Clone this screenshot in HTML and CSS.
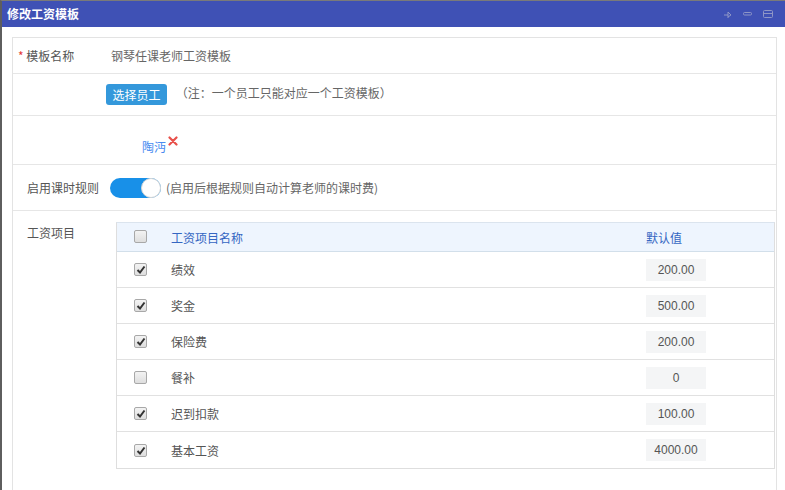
FILE: index.html
```html
<!DOCTYPE html>
<html lang="zh">
<head>
<meta charset="utf-8">
<title>修改工资模板</title>
<link rel="stylesheet" href="styles.css">
</head>
<body>
<div class="window">
  <div class="titlebar">
    <span class="title">修改工资模板</span>
    <div class="tools">
      <svg width="8" height="7" viewBox="0 0 8 7"><path d="M0 4h4M4 1v6M4 1l3 3l-3 2" fill="none" stroke="#8f96c6" stroke-width="1"/></svg>
      <svg width="9" height="4" viewBox="0 0 9 4"><rect x="0.5" y="0.5" width="8" height="2.5" rx="1" fill="none" stroke="#8f96c6"/></svg>
      <svg width="10" height="8" viewBox="0 0 10 8"><rect x="0.5" y="0.5" width="9" height="7" rx="1" fill="none" stroke="#8f96c6"/><path d="M1 3.5h8" stroke="#8f96c6"/></svg>
    </div>
  </div>
  <div class="content">
    <div class="form">
      <div class="row row-name">
        <div class="label"><span class="req">*</span> 模板名称</div>
        <div class="value name-value">钢琴任课老师工资模板</div>
      </div>
      <div class="row row-select">
        <div class="label"></div>
        <div class="value">
          <button class="btn">选择员工</button>
          <span class="note">（注：一个员工只能对应一个工资模板）</span>
        </div>
      </div>
      <div class="row row-staff">
        <div class="label"></div>
        <div class="value staff">
          <span class="staff-name">陶沔</span><svg class="remove" width="10" height="10" viewBox="0 0 10 10"><path d="M1.5 1.5l7 7M8.5 1.5l-7 7" stroke="#e8504a" stroke-width="2.2" stroke-linecap="round"/></svg>
        </div>
      </div>
      <div class="row row-rule">
        <div class="label">启用课时规则</div>
        <div class="value rule">
          <span class="switch"><span class="knob"></span></span>
          <span class="note">(启用后根据规则自动计算老师的课时费)</span>
        </div>
      </div>
      <div class="row row-items">
        <div class="label">工资项目</div>
        <div class="value items">
          <div class="table">
            <div class="tr th">
              <div class="td"><span class="cb"></span></div>
              <div class="td">工资项目名称</div>
              <div class="td">默认值</div>
            </div>
            <div class="tr">
              <div class="td"><span class="cb checked"><svg width="10" height="9" viewBox="0 0 10 9"><path d="M1.5 5l2.5 2.5l4.5-6" fill="none" stroke="#333" stroke-width="2"/></svg></span></div>
              <div class="td">绩效</div>
              <div class="td"><span class="num">200.00</span></div>
            </div>
            <div class="tr">
              <div class="td"><span class="cb checked"><svg width="10" height="9" viewBox="0 0 10 9"><path d="M1.5 5l2.5 2.5l4.5-6" fill="none" stroke="#333" stroke-width="2"/></svg></span></div>
              <div class="td">奖金</div>
              <div class="td"><span class="num">500.00</span></div>
            </div>
            <div class="tr">
              <div class="td"><span class="cb checked"><svg width="10" height="9" viewBox="0 0 10 9"><path d="M1.5 5l2.5 2.5l4.5-6" fill="none" stroke="#333" stroke-width="2"/></svg></span></div>
              <div class="td">保险费</div>
              <div class="td"><span class="num">200.00</span></div>
            </div>
            <div class="tr">
              <div class="td"><span class="cb"></span></div>
              <div class="td">餐补</div>
              <div class="td"><span class="num">0</span></div>
            </div>
            <div class="tr">
              <div class="td"><span class="cb checked"><svg width="10" height="9" viewBox="0 0 10 9"><path d="M1.5 5l2.5 2.5l4.5-6" fill="none" stroke="#333" stroke-width="2"/></svg></span></div>
              <div class="td">迟到扣款</div>
              <div class="td"><span class="num">100.00</span></div>
            </div>
            <div class="tr">
              <div class="td"><span class="cb checked"><svg width="10" height="9" viewBox="0 0 10 9"><path d="M1.5 5l2.5 2.5l4.5-6" fill="none" stroke="#333" stroke-width="2"/></svg></span></div>
              <div class="td">基本工资</div>
              <div class="td"><span class="num">4000.00</span></div>
            </div>
          </div>
        </div>
      </div>
    </div>
  </div>
</div>
</body>
</html>
```

FILE: styles.css
```css
* { box-sizing: border-box; }
html, body { margin: 0; padding: 0; }
body {
  width: 785px;
  height: 490px;
  overflow: hidden;
  background: #fff;
  font-family: "Noto Sans CJK SC", "Liberation Sans", sans-serif;
  font-size: 12px;
  color: #555;
}
.window {
  height: 490px;
  border-left: 2px solid #5e5e5e;
  border-top: 1px solid #7a7a7a;
  display: flex;
  flex-direction: column;
}
.titlebar {
  height: 26px;
  background: #3f51b5;
  display: flex;
  align-items: center;
  justify-content: space-between;
  padding: 0 0 0 5px;
  flex: none;
}
.title {
  color: #fff;
  font-size: 12px;
  font-weight: bold;
  line-height: 26px;
}
.tools {
  display: flex;
  align-items: center;
  gap: 11px;
  padding-right: 12px;
}
.content {
  flex: 1;
  padding: 10px 8px 0 10px;
  overflow: hidden;
}
.form {
  border: 1px solid #e3e3e3;
  border-bottom: none;
  height: 100%;
}
.row {
  display: flex;
  align-items: center;
  border-bottom: 1px solid #e6e6e6;
}
.label {
  width: 93px;
  flex: none;
  padding-left: 5px;
  color: #555;
  white-space: nowrap;
}
.req { color: #e53935; }
.row-name { height: 36px; }
.row-name .label { padding-left: 5px; }
.row-name .value { padding-left: 5px; color: #666; }
.row-select { height: 42px; }
.row-staff { height: 49px; align-items: flex-start; }
.row-rule { height: 46px; }
.row-rule .label, .row-items .label { padding-left: 14px; }
.row-items { align-items: flex-start; border-bottom: none; padding-top: 11px; }
.row-items .label { padding-top: 2px; }

.btn {
  font-family: inherit;
  font-size: 12px;
  color: #fff;
  background: #3498db;
  border: none;
  border-radius: 3px;
  height: 21px;
  width: 61px;
  padding: 0;
  margin-right: 6px;
  vertical-align: middle;
}
.note { color: #666; }
.staff { padding-left: 36px; padding-top: 19px; display: flex; align-items: flex-start; }
.staff-name { color: #4a8cf0; line-height: 20px; padding-top: 2px; }
.remove { margin-left: 2px; margin-top: 1px; }

.rule { display: flex; align-items: center; padding-left: 4px; }
.switch {
  width: 51px;
  height: 20px;
  border-radius: 10px;
  background: #1890e8;
  position: relative;
  margin-right: 5px;
  flex: none;
}
.knob {
  position: absolute;
  right: 0;
  top: 0;
  width: 20px;
  height: 20px;
  border-radius: 50%;
  background: #fff;
  border: 1px solid #d6d6d6;
}

.items { padding-left: 10px; flex: 1; padding-right: 2px; }
.table {
  border: 1px solid #dedede;
  border-top-color: #dbe4ee;
  width: 659px;
}
.tr {
  display: grid;
  grid-template-columns: 54px 1fr 128px;
  height: 36px;
  border-bottom: 1px solid #e1e1e1;
  align-items: center;
}
.tr:last-child { border-bottom: none; }
.th {
  height: 29px;
  background: #eef5fe;
  border-bottom: 1px solid #d2dfea;
  color: #2f68c4;
}
.td { color: #555; }
.th .td { color: #3466c2; }
.td:first-child { padding-left: 17px; display: flex; align-items: center; }
.cb {
  width: 13px;
  height: 13px;
  border: 1px solid #a8a8a8;
  border-radius: 2px;
  background: linear-gradient(#f3f3f3, #dedede);
  display: inline-flex;
  align-items: center;
  justify-content: center;
}
.th .cb { margin-top: -2px; }
.cb svg { display: block; }
.num {
  display: inline-block;
  width: 60px;
  height: 22px;
  line-height: 22px;
  background: #f4f5f6;
  text-align: center;
  font-family: "Liberation Sans", "Noto Sans CJK SC", sans-serif;
  font-size: 12px;
  color: #555;
}
```
